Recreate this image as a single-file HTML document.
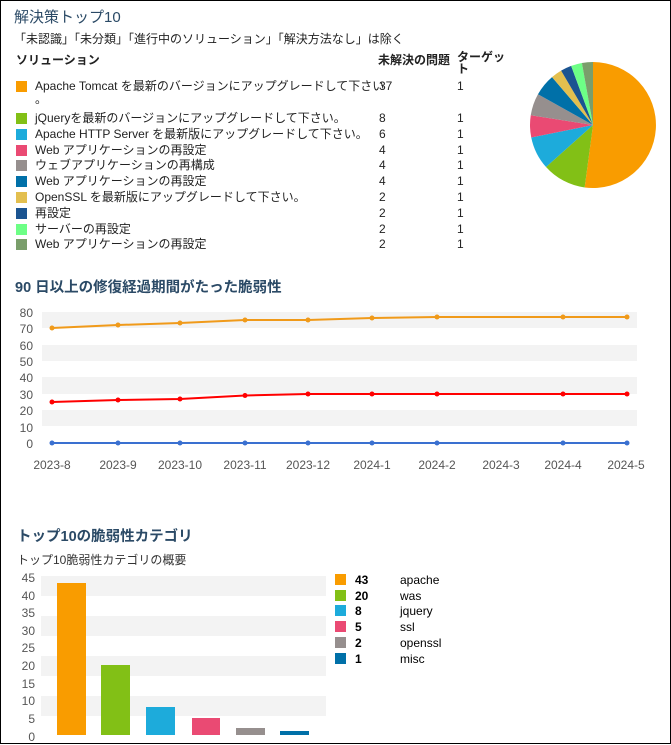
<!DOCTYPE html>
<html><head><meta charset="utf-8"><style>
html,body{margin:0;padding:0;background:#fff}
body{width:669px;height:742px;border:1px solid #000;position:relative;overflow:hidden;font-family:"Liberation Sans","Noto Sans CJK JP",sans-serif;color:#222}
.a{position:absolute;white-space:nowrap}
.t{font-size:14.5px;color:#2b4a66;font-weight:bold}
.s{font-size:12px}
.r{font-size:12px;line-height:15.7px}
.sq{position:absolute;width:11px;height:11px}
</style></head><body>
<div class="a t" style="left:13px;top:5px;font-weight:normal;color:#2b4a66;font-size:15px">解決策トップ10</div>
<div class="a s" style="left:13px;top:29px">「未認識」「未分類」「進行中のソリューション」「解決方法なし」は除く</div>
<div class="a s" style="left:15px;top:50px;font-weight:bold">ソリューション</div>
<div class="a s" style="left:377px;top:50px;font-weight:bold">未解決の問題</div>
<div class="a s" style="left:456px;top:50px;font-weight:bold;line-height:12px">ターゲッ<br>ト</div>
<div class="a r" style="left:0;top:78px;width:520px">
<div style="position:relative;height:32px"><span class="sq" style="left:15px;top:2px;background:#f99c00"></span><span class="a" style="left:34px;top:0">Apache Tomcat を最新のバージョンにアップグレードして下さい</span><span class="a" style="left:34px;top:13px">。</span><span class="a" style="left:378px">37</span><span class="a" style="left:456px">1</span></div>
<div style="position:relative;height:15.8px"><span class="sq" style="left:15px;top:2px;background:#82c016"></span><span class="a" style="left:34px">jQueryを最新のバージョンにアップグレードして下さい。</span><span class="a" style="left:378px">8</span><span class="a" style="left:456px">1</span></div>
<div style="position:relative;height:15.8px"><span class="sq" style="left:15px;top:2px;background:#1dabdb"></span><span class="a" style="left:34px">Apache HTTP Server を最新版にアップグレードして下さい。</span><span class="a" style="left:378px">6</span><span class="a" style="left:456px">1</span></div>
<div style="position:relative;height:15.8px"><span class="sq" style="left:15px;top:2px;background:#ea4a73"></span><span class="a" style="left:34px">Web アプリケーションの再設定</span><span class="a" style="left:378px">4</span><span class="a" style="left:456px">1</span></div>
<div style="position:relative;height:15.8px"><span class="sq" style="left:15px;top:2px;background:#968f8e"></span><span class="a" style="left:34px">ウェブアプリケーションの再構成</span><span class="a" style="left:378px">4</span><span class="a" style="left:456px">1</span></div>
<div style="position:relative;height:15.8px"><span class="sq" style="left:15px;top:2px;background:#0070a8"></span><span class="a" style="left:34px">Web アプリケーションの再設定</span><span class="a" style="left:378px">4</span><span class="a" style="left:456px">1</span></div>
<div style="position:relative;height:15.8px"><span class="sq" style="left:15px;top:2px;background:#e3bf4f"></span><span class="a" style="left:34px">OpenSSL を最新版にアップグレードして下さい。</span><span class="a" style="left:378px">2</span><span class="a" style="left:456px">1</span></div>
<div style="position:relative;height:15.8px"><span class="sq" style="left:15px;top:2px;background:#1b5491"></span><span class="a" style="left:34px">再設定</span><span class="a" style="left:378px">2</span><span class="a" style="left:456px">1</span></div>
<div style="position:relative;height:15.8px"><span class="sq" style="left:15px;top:2px;background:#6dff86"></span><span class="a" style="left:34px">サーバーの再設定</span><span class="a" style="left:378px">2</span><span class="a" style="left:456px">1</span></div>
<div style="position:relative;height:15.8px"><span class="sq" style="left:15px;top:2px;background:#7a9e6b"></span><span class="a" style="left:34px">Web アプリケーションの再設定</span><span class="a" style="left:378px">2</span><span class="a" style="left:456px">1</span></div>
</div>
<svg class="a" style="left:0;top:0" width="671" height="744">
<g transform="translate(-1,-1)">
<path d="M593,125L593,62A63,63 0 1 1 584.66,187.45Z" fill="#f99c00"/>
<path d="M593,125L584.66,187.45A63,63 0 0 1 546.04,167Z" fill="#82c016"/>
<path d="M593,125L546.04,167A63,63 0 0 1 531.25,137.46Z" fill="#1dabdb"/>
<path d="M593,125L531.25,137.46A63,63 0 0 1 530.76,115.29Z" fill="#ea4a73"/>
<path d="M593,125L530.76,115.29A63,63 0 0 1 537.98,94.31Z" fill="#968f8e"/>
<path d="M593,125L537.98,94.31A63,63 0 0 1 552.03,77.14Z" fill="#0070a8"/>
<path d="M593,125L552.03,77.14A63,63 0 0 1 561.1,70.67Z" fill="#e3bf4f"/>
<path d="M593,125L561.1,70.67A63,63 0 0 1 571.16,65.91Z" fill="#1b5491"/>
<path d="M593,125L571.16,65.91A63,63 0 0 1 581.91,62.98Z" fill="#6dff86"/>
<path d="M593,125L581.91,62.98A63,63 0 0 1 593,62Z" fill="#7a9e6b"/>
<text x="15" y="292" font-size="14.5" font-weight="bold" fill="#2b4a66">90 日以上の修復経過期間がたった脆弱性</text>
<g fill="#f3f3f3"><rect x="42" y="312" width="595" height="16"/><rect x="42" y="345" width="595" height="16"/><rect x="42" y="377" width="595" height="17"/><rect x="42" y="410" width="595" height="16"/></g>
<g font-size="12" fill="#555" text-anchor="end"><text x="33" y="317">80</text><text x="33" y="333">70</text><text x="33" y="350">60</text><text x="33" y="366">50</text><text x="33" y="382">40</text><text x="33" y="399">30</text><text x="33" y="415">20</text><text x="33" y="432">10</text><text x="33" y="448">0</text></g>
<g font-size="12" fill="#555" text-anchor="middle"><text x="52" y="469">2023-8</text><text x="118" y="469">2023-9</text><text x="180" y="469">2023-10</text><text x="245" y="469">2023-11</text><text x="308" y="469">2023-12</text><text x="372" y="469">2024-1</text><text x="437" y="469">2024-2</text><text x="501" y="469">2024-3</text><text x="563" y="469">2024-4</text><text x="626" y="469">2024-5</text></g>
<polyline fill="none" stroke="#f09a1a" stroke-width="2" points="52,328 118,325 180,323 245,320 308,320 372,318 437,317 563,317 627,317"/>
<g fill="#f09a1a"><circle cx="52" cy="328" r="2.5"/><circle cx="118" cy="325" r="2.5"/><circle cx="180" cy="323" r="2.5"/><circle cx="245" cy="320" r="2.5"/><circle cx="308" cy="320" r="2.5"/><circle cx="372" cy="318" r="2.5"/><circle cx="437" cy="317" r="2.5"/><circle cx="563" cy="317" r="2.5"/><circle cx="627" cy="317" r="2.5"/></g>
<polyline fill="none" stroke="#f00" stroke-width="2" points="52,402 118,400 180,399 245,395.5 308,394 372,394 437,394 563,394 627,394"/>
<g fill="#f00"><circle cx="52" cy="402" r="2.5"/><circle cx="118" cy="400" r="2.5"/><circle cx="180" cy="399" r="2.5"/><circle cx="245" cy="395.5" r="2.5"/><circle cx="308" cy="394" r="2.5"/><circle cx="372" cy="394" r="2.5"/><circle cx="437" cy="394" r="2.5"/><circle cx="563" cy="394" r="2.5"/><circle cx="627" cy="394" r="2.5"/></g>
<polyline fill="none" stroke="#3a70d0" stroke-width="2" points="52,443 627,443"/>
<g fill="#3a70d0"><circle cx="52" cy="443" r="2.5"/><circle cx="118" cy="443" r="2.5"/><circle cx="180" cy="443" r="2.5"/><circle cx="245" cy="443" r="2.5"/><circle cx="308" cy="443" r="2.5"/><circle cx="372" cy="443" r="2.5"/><circle cx="437" cy="443" r="2.5"/><circle cx="563" cy="443" r="2.5"/><circle cx="627" cy="443" r="2.5"/></g>
<text x="17" y="541" font-size="14.5" font-weight="bold" fill="#2b4a66">トップ10の脆弱性カテゴリ</text>
<text x="17" y="564" font-size="12" fill="#333">トップ10脆弱性カテゴリの概要</text>
<g fill="#f3f3f3"><rect x="41" y="576" width="285" height="20"/><rect x="41" y="616" width="285" height="20"/><rect x="41" y="656" width="285" height="20"/><rect x="41" y="696" width="285" height="20"/></g>
<g font-size="12" fill="#555" text-anchor="end"><text x="35" y="582">45</text><text x="35" y="600">40</text><text x="35" y="617">35</text><text x="35" y="635">30</text><text x="35" y="652">25</text><text x="35" y="670">20</text><text x="35" y="688">15</text><text x="35" y="705">10</text><text x="35" y="723">5</text><text x="35" y="741">0</text></g>
<rect x="57" y="583" width="29" height="152" fill="#f99c00"/>
<rect x="101" y="665" width="29" height="70" fill="#82c016"/>
<rect x="146" y="707" width="29" height="28" fill="#1dabdb"/>
<rect x="192" y="718" width="28" height="17" fill="#ea4a73"/>
<rect x="236" y="728" width="29" height="7" fill="#968f8e"/>
<rect x="280" y="731" width="29" height="4" fill="#0070a8"/>
<g font-size="12"><rect x="335" y="574" width="11" height="11" fill="#f99c00"/><text x="355" y="584" font-weight="bold">43</text><text x="400" y="584">apache</text>
<rect x="335" y="590" width="11" height="11" fill="#82c016"/><text x="355" y="600" font-weight="bold">20</text><text x="400" y="600">was</text>
<rect x="335" y="605" width="11" height="11" fill="#1dabdb"/><text x="355" y="615" font-weight="bold">8</text><text x="400" y="615">jquery</text>
<rect x="335" y="621" width="11" height="11" fill="#ea4a73"/><text x="355" y="631" font-weight="bold">5</text><text x="400" y="631">ssl</text>
<rect x="335" y="637" width="11" height="11" fill="#968f8e"/><text x="355" y="647" font-weight="bold">2</text><text x="400" y="647">openssl</text>
<rect x="335" y="653" width="11" height="11" fill="#0070a8"/><text x="355" y="663" font-weight="bold">1</text><text x="400" y="663">misc</text></g>
</g>
</svg>
</body></html>
